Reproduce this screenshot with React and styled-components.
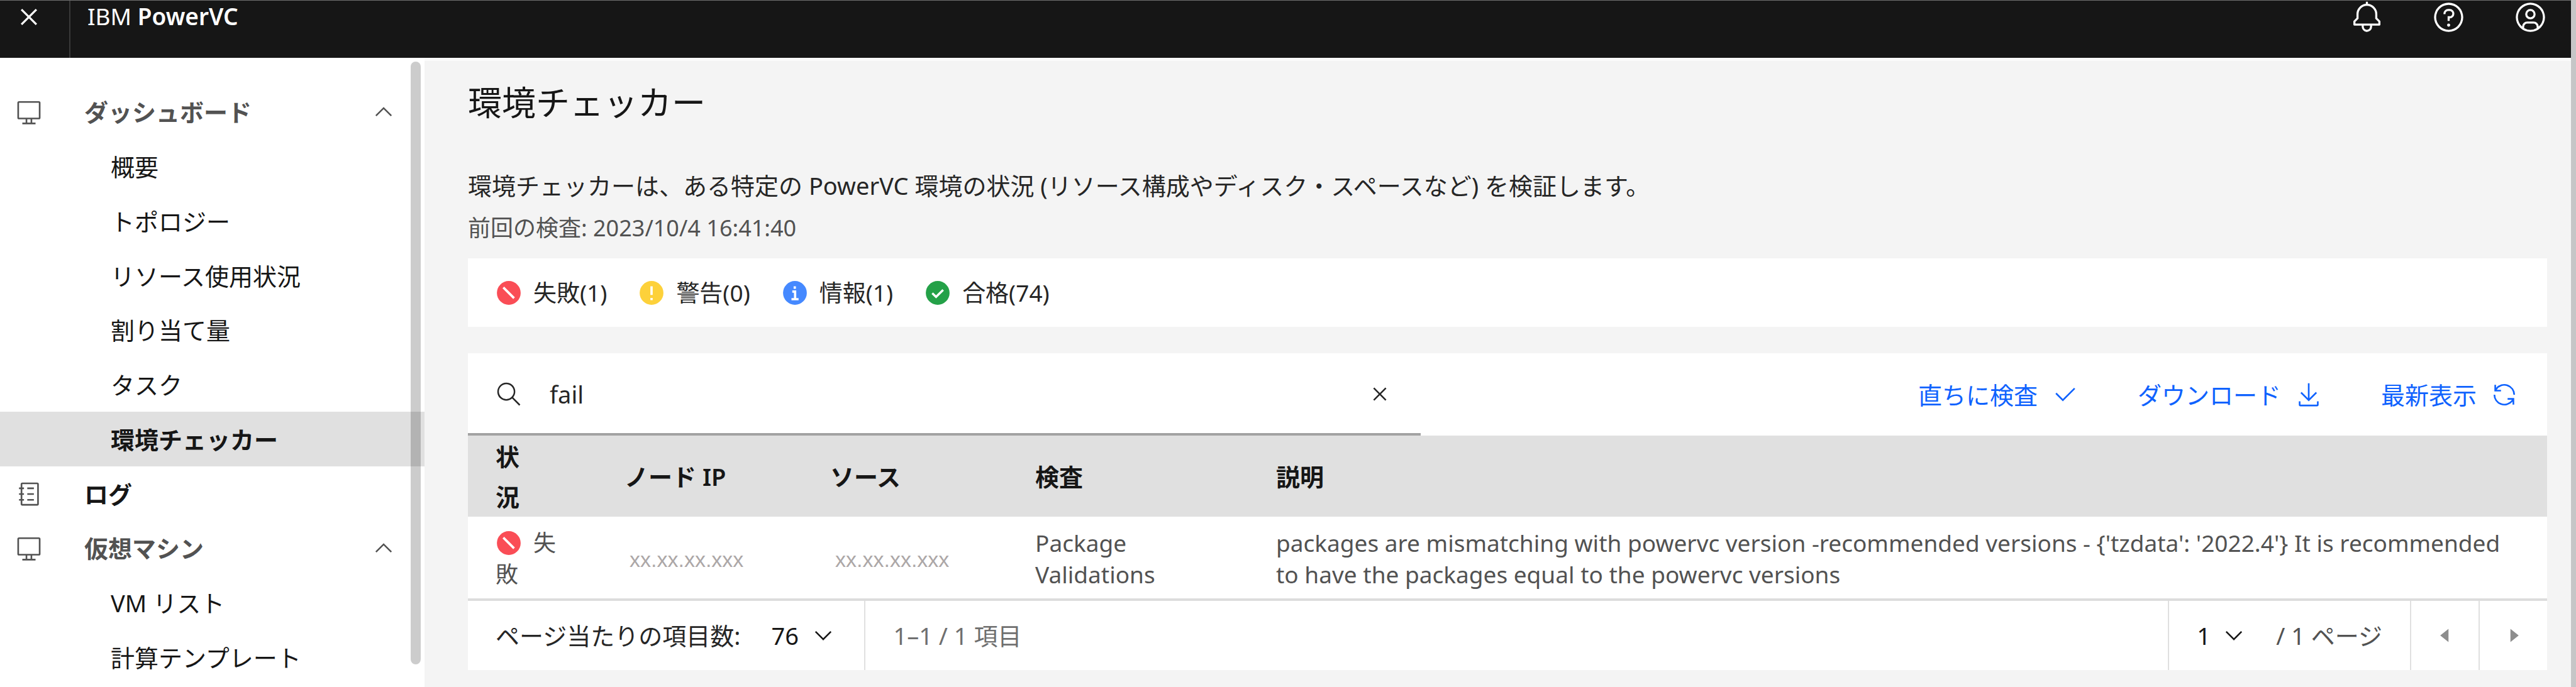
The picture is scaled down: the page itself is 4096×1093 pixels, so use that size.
import React, { useState } from "react";
import styled, { createGlobalStyle, css } from "styled-components";

const color = {
  ink: "#161616",
  text: "#262626",
  muted: "#525252",
  subtle: "#6f6f6f",
  line: "#e0e0e0",
  layer: "#ffffff",
  background: "#f4f4f4",
  link: "#0f62fe",
};

const GlobalStyle = createGlobalStyle`
  *, *::before, *::after { box-sizing: border-box; }
  body {
    margin: 0;
    background: ${color.background};
    color: ${color.text};
    font-family: "Noto Sans", "Noto Sans CJK JP", sans-serif;
    font-size: 38px;
    line-height: 50px;
  }
  button, input, select { font: inherit; color: inherit; margin: 0; }
  button { background: none; border: 0; padding: 0; cursor: pointer; }
  a { color: inherit; text-decoration: none; }
  svg { display: block; flex: none; }
`;

/* ---------- icons ---------- */

const Glyph = styled.svg`
  width: ${(p) => p.$size || 42}px;
  height: ${(p) => p.$size || 42}px;
  fill: currentColor;
`;

const paths = {
  close: "M24 9.4L22.6 8 16 14.6 9.4 8 8 9.4 14.6 16 8 22.6 9.4 24 16 17.4 22.6 24 24 22.6 17.4 16z",
  bell: "M28.707 19.293L26 16.586V13a10.014 10.014 0 0 0-9-9.95V1h-2v2.05A10.014 10.014 0 0 0 6 13v3.586l-2.707 2.707A1 1 0 0 0 3 20v3a1 1 0 0 0 1 1h7v.777a5.152 5.152 0 0 0 4.5 5.199A5.006 5.006 0 0 0 21 25v-1h7a1 1 0 0 0 1-1v-3a1 1 0 0 0-.293-.707zM19 25a3 3 0 0 1-6 0v-1h6zM27 22H5v-1.586l2.707-2.707A1 1 0 0 0 8 17v-4a8 8 0 0 1 16 0v4a1 1 0 0 0 .293.707L27 20.414z",
  help: "M16 2a14 14 0 1 0 14 14A14 14 0 0 0 16 2zm0 26a12 12 0 1 1 12-12 12 12 0 0 1-12 12zM16 22a1.5 1.5 0 1 0 0 3 1.5 1.5 0 0 0 0-3zM17 8h-1.5a4.49 4.49 0 0 0-4.5 4.5v.5h2v-.5a2.5 2.5 0 0 1 2.5-2.5H17a2.5 2.5 0 0 1 0 5h-2v4.5h2V17a4.5 4.5 0 0 0 0-9z",
  user: "M16 8a5 5 0 1 0 5 5 5 5 0 0 0-5-5zm0 8a3 3 0 1 1 3-3 3 3 0 0 1-3 3zM16 2a14 14 0 1 0 14 14A14.016 14.016 0 0 0 16 2zm-6 24.377V25a3.003 3.003 0 0 1 3-3h6a3.003 3.003 0 0 1 3 3v1.377a11.899 11.899 0 0 1-12 0zm13.993-1.451A5.002 5.002 0 0 0 19 20h-6a5.002 5.002 0 0 0-4.992 4.926 12 12 0 1 1 15.985 0z",
  screen: "M28 3H4a2 2 0 0 0-2 2v18a2 2 0 0 0 2 2h8v4H8v2h16v-2h-4v-4h8a2 2 0 0 0 2-2V5a2 2 0 0 0-2-2zM18 29h-4v-4h4zM28 23H4V5h24z",
  catalog: "M26 2H8a2 2 0 0 0-2 2v4H4v2h2v5H4v2h2v5H4v2h2v4a2 2 0 0 0 2 2h18a2 2 0 0 0 2-2V4a2 2 0 0 0-2-2zm0 26H8v-4h2v-2H8v-5h2v-2H8v-5h2V8H8V4h18zM14 8h8v2h-8zM14 15h8v2h-8zM14 22h8v2h-8z",
  chevronUp: "M16 10l10 10-1.4 1.4-8.6-8.6-8.6 8.6L6 20z",
  chevronDown: "M16 22L6 12l1.4-1.4 8.6 8.6 8.6-8.6L26 12z",
  search: "M30 28.6L21.4 20c3.8-4.6 3.2-11.6-1.4-15.4S8.4 1.4 4.6 6 1.4 17.6 6 21.4c4 3.4 10 3.4 14 0l8.6 8.6zM4 13c0-5 4-9 9-9s9 4 9 9-4 9-9 9-9-4-9-9z",
  check: "M13 24L4 15l1.414-1.414L13 21.171 26.586 7.586 28 9z",
  download: "M26 24v4H6v-4H4v4a2 2 0 0 0 2 2h20a2 2 0 0 0 2-2v-4zM26 14l-1.41-1.41L17 20.17V2h-2v18.17l-7.59-7.58L6 14l10 10z",
  renew: "M12 10H6.78A11 11 0 0 1 27 16h2A13 13 0 0 0 6 7.68V4H4v8h8zM20 22h5.22A11 11 0 0 1 5 16H3a13 13 0 0 0 23 8.32V28h2v-8h-8z",
  caretLeft: "M20 24l-10-8 10-8z",
  caretRight: "M12 8l10 8-10 8z",
};

const Icon = ({ name, size }) => (
  <Glyph $size={size} viewBox="0 0 32 32" aria-hidden="true">
    <path d={paths[name]} />
  </Glyph>
);

const statusKinds = {
  fail: { fill: "#fa4d56", mark: <path d="M9.4 9.4l13 13" strokeWidth="2.8" /> },
  warn: { fill: "#fdd13a", mark: <path d="M16 8v10.4M16 22v2.8" strokeWidth="2.8" /> },
  info: { fill: "#4589ff", mark: <path d="M15.8 8v3M12.8 14.4h3.4v9M11.8 23.6h8.6" strokeWidth="2.8" /> },
  pass: { fill: "#24a148", mark: <path d="M9.4 16.4l4.6 4.4 8.6-8.4" strokeWidth="2.6" /> },
};

const StatusIcon = ({ kind }) => (
  <Glyph viewBox="0 0 32 32" aria-hidden="true">
    <circle cx="16" cy="16" r="14.4" fill={statusKinds[kind].fill} />
    <g fill="none" stroke="#fff">{statusKinds[kind].mark}</g>
  </Glyph>
);

/* ---------- shell ---------- */

const Shell = styled.div`
  display: flex;
  flex-direction: column;
  min-height: 100vh;
  border-right: 8px solid #c6c6c7;
`;

const Header = styled.header`
  display: flex;
  align-items: stretch;
  height: 92px;
  background: ${color.ink};
  color: #fff;
  border-top: 1px solid #6f6f6f;
`;

const MenuButton = styled.button`
  display: flex;
  justify-content: center;
  width: 112px;
  padding-right: 18px;
  border-right: 2px solid #393939;
`;

const Brand = styled.a`
  padding-left: 27px;
  font-size: 37px;
  b { font-weight: 600; }
`;

const HeaderActions = styled.div`
  display: flex;
  margin-left: auto;
`;

const HeaderButton = styled.button`
  display: flex;
  justify-content: center;
  width: 130px;
`;

const Body = styled.div`
  display: flex;
  flex: 1;
`;

const Sidebar = styled.nav`
  position: relative;
  display: flex;
  flex: none;
  width: 675px;
  background: ${color.layer};
  padding: 43px 0 5px;
`;

const ScrollThumb = styled.div`
  position: absolute;
  top: 6px;
  right: 6px;
  bottom: 37px;
  width: 16px;
  border-radius: 8px;
  background: rgba(0, 0, 0, 0.2);
`;

const NavList = styled.ul`
  display: flex;
  flex-direction: column;
  flex: 1;
  margin: 0;
  padding: 0;
  list-style: none;
`;

const NavItem = styled.li`
  display: flex;
  flex: 1;
  min-height: 80px;
`;

const navRow = css`
  display: flex;
  align-items: center;
  width: 100%;
  text-align: left;
`;

const groupRow = css`
  ${navRow}
  gap: 67px;
  padding: 0 44px 0 25px;
  font-weight: 600;
`;

const GroupButton = styled.button`
  ${groupRow}
  color: ${color.muted};
  & > svg:last-child { margin-left: auto; }
`;

const GroupLink = styled.a`
  ${groupRow}
  color: ${color.ink};
  & > svg { color: ${color.muted}; }
`;

const SubLink = styled.a`
  ${navRow}
  padding-left: 176px;
  color: ${color.ink};
  ${(p) => p.$current && css`background: ${color.line}; font-weight: 600;`}
`;

/* ---------- page ---------- */

const Main = styled.main`
  flex: 1;
  min-width: 0;
  padding: 32px 38px 28px 69px;
  border-top: 5px solid #fafafa;
`;

const Title = styled.h1`
  margin: 0;
  font-size: 54px;
  font-weight: 400;
  line-height: 68px;
  color: ${color.ink};
`;

const Lead = styled.p`
  margin: 73px 0 0;
`;

const LastRun = styled.p`
  margin: 18px 0 0;
  font-size: 36px;
  color: ${color.muted};
`;

const Summary = styled.ul`
  display: flex;
  gap: 50px;
  margin: 23px 0 42px;
  padding: 30px 44px 29px;
  list-style: none;
  font-size: 37px;
  background: ${color.layer};
`;

const SummaryItem = styled.li`
  display: flex;
  align-items: center;
  gap: 18px;
`;

const Toolbar = styled.div`
  display: grid;
  grid-template-columns: 11fr 13fr;
  height: 131px;
  background: ${color.layer};
`;

const SearchBox = styled.div`
  display: flex;
  align-items: center;
  padding: 2px 44px 0;
  border-bottom: 4px solid #a2a2a2;
`;

const SearchInput = styled.input`
  flex: 1;
  min-width: 0;
  margin: 0 44px;
  padding: 0;
  border: 0;
  outline: 0;
  background: none;
`;

const Actions = styled.div`
  display: flex;
  justify-content: flex-end;
`;

const Action = styled.button`
  display: flex;
  align-items: center;
  gap: 23px;
  padding: 0 47px;
  color: ${color.link};
`;

const Table = styled.table`
  width: 100%;
  table-layout: fixed;
  border-collapse: separate;
  border-spacing: 0;
  background: ${color.layer};
  border-bottom: 4px solid #dcdcdc;
`;

const Col = styled.col`
  width: ${(p) => p.$width}px;
`;

const Th = styled.th`
  height: 129px;
  padding: 0 42px 0 ${(p) => (p.$narrow ? 44 : 42)}px;
  ${(p) => p.$narrow && css`padding-right: 110px;`}
  background: ${color.line};
  color: ${color.ink};
  font-weight: 600;
  line-height: 64px;
  text-align: left;
`;

const Td = styled.td`
  height: 130px;
  padding: 4px 42px 0 ${(p) => (p.$first ? 44 : 42)}px;
  font-size: ${(p) => (p.$first ? 36 : 37)}px;
  color: ${color.muted};
  vertical-align: middle;
  & > svg {
    display: inline-block;
    margin-right: 18px;
    vertical-align: -8px;
  }
`;

const Address = styled.span`
  padding-left: 8px;
  font-family: "Liberation Sans", Arial, sans-serif;
  font-size: 34px;
  color: #aca7a7;
`;

const Pagination = styled.div`
  display: flex;
  align-items: stretch;
  height: 110px;
  background: ${color.layer};
`;

const PageCell = styled.div`
  display: flex;
  align-items: center;
  padding: 0 44px;
  white-space: nowrap;
  color: ${(p) => p.$tone || color.text};
  ${(p) => p.$divided && css`border-left: 2px solid ${color.line};`}
  ${(p) => p.$end && css`margin-left: auto;`}
`;

const SelectWrap = styled.div`
  display: flex;
  align-items: center;
  position: relative;
  color: ${color.ink};
  & > svg { position: absolute; right: 0; pointer-events: none; }
`;

const Select = styled.select`
  appearance: none;
  width: ${(p) => p.$width}px;
  padding: 0;
  border: 0;
  outline: 0;
  background: none;
`;

const PageSizeLabel = styled.label`
  margin-right: 49px;
`;

const PageTotal = styled.label`
  margin-left: 46px;
  color: ${color.muted};
`;

const PageButton = styled.button`
  display: flex;
  align-items: center;
  justify-content: center;
  width: 109px;
  border-left: 2px solid ${color.line};
  color: #8d8d8d;
`;

/* ---------- data ---------- */

const nav = [
  { kind: "group", icon: "screen", label: "ダッシュボード" },
  { kind: "sub", label: "概要" },
  { kind: "sub", label: "トポロジー" },
  { kind: "sub", label: "リソース使用状況" },
  { kind: "sub", label: "割り当て量" },
  { kind: "sub", label: "タスク" },
  { kind: "sub", label: "環境チェッカー", current: true },
  { kind: "link", icon: "catalog", label: "ログ" },
  { kind: "group", icon: "screen", label: "仮想マシン" },
  { kind: "sub", label: "VM リスト" },
  { kind: "sub", label: "計算テンプレート" },
];

const summary = [
  ["fail", "失敗(1)"],
  ["warn", "警告(0)"],
  ["info", "情報(1)"],
  ["pass", "合格(74)"],
];

const actions = [
  ["check", "直ちに検査"],
  ["download", "ダウンロード"],
  ["renew", "最新表示"],
];

const rows = [
  {
    kind: "fail",
    status: "失敗",
    node: "xx.xx.xx.xxx",
    source: "xx.xx.xx.xxx",
    check: "Package Validations",
    text: "packages are mismatching with powervc version -recommended versions - {'tzdata': '2022.4'} It is recommended to have the packages equal to the powervc versions",
  },
];

const NavEntry = ({ item }) => {
  if (item.kind === "group") {
    return (
      <GroupButton type="button" aria-expanded="true">
        <Icon name={item.icon} />
        {item.label}
        <Icon name="chevronUp" />
      </GroupButton>
    );
  }
  if (item.kind === "link") {
    return (
      <GroupLink href="#">
        <Icon name={item.icon} />
        {item.label}
      </GroupLink>
    );
  }
  return (
    <SubLink href="#" $current={item.current} aria-current={item.current ? "page" : undefined}>
      {item.label}
    </SubLink>
  );
};

export default function App() {
  const [query, setQuery] = useState("fail");

  return (
    <>
      <GlobalStyle />
      <Shell>
        <Header>
          <MenuButton type="button" aria-label="メニューを閉じる">
            <Icon name="close" size={52} />
          </MenuButton>
          <Brand href="#">
            IBM <b>PowerVC</b>
          </Brand>
          <HeaderActions>
            <HeaderButton type="button" aria-label="通知"><Icon name="bell" size={53} /></HeaderButton>
            <HeaderButton type="button" aria-label="ヘルプ"><Icon name="help" size={53} /></HeaderButton>
            <HeaderButton type="button" aria-label="ユーザー"><Icon name="user" size={53} /></HeaderButton>
          </HeaderActions>
        </Header>

        <Body>
          <Sidebar>
            <NavList>
              {nav.map((item) => (
                <NavItem key={item.label}>
                  <NavEntry item={item} />
                </NavItem>
              ))}
            </NavList>
            <ScrollThumb />
          </Sidebar>

          <Main>
            <Title>環境チェッカー</Title>
            <Lead>
              環境チェッカーは、ある特定の PowerVC 環境の状況 (リソース構成やディスク・スペースなど) を検証します。
            </Lead>
            <LastRun>前回の検査: 2023/10/4 16:41:40</LastRun>

            <Summary>
              {summary.map(([kind, label]) => (
                <SummaryItem key={kind}>
                  <StatusIcon kind={kind} />
                  {label}
                </SummaryItem>
              ))}
            </Summary>

            <Toolbar>
              <SearchBox>
                <Icon name="search" />
                <SearchInput
                  type="text"
                  aria-label="検索"
                  value={query}
                  onChange={(e) => setQuery(e.target.value)}
                />
                <button type="button" aria-label="クリア" onClick={() => setQuery("")}>
                  <Icon name="close" />
                </button>
              </SearchBox>
              <Actions>
                {actions.map(([icon, label]) => (
                  <Action type="button" key={icon}>
                    {label}
                    <Icon name={icon} />
                  </Action>
                ))}
              </Actions>
            </Toolbar>

            <Table>
              <colgroup>
                <Col $width={207} />
                <Col $width={327} />
                <Col $width={326} />
                <Col $width={383} />
                <col />
              </colgroup>
              <thead>
                <tr>
                  <Th scope="col" $narrow>状況</Th>
                  <Th scope="col">ノード IP</Th>
                  <Th scope="col">ソース</Th>
                  <Th scope="col">検査</Th>
                  <Th scope="col">説明</Th>
                </tr>
              </thead>
              <tbody>
                {rows.map((row) => (
                  <tr key={row.check}>
                    <Td $first>
                      <StatusIcon kind={row.kind} />
                      {row.status}
                    </Td>
                    <Td><Address>{row.node}</Address></Td>
                    <Td><Address>{row.source}</Address></Td>
                    <Td>{row.check}</Td>
                    <Td>{row.text}</Td>
                  </tr>
                ))}
              </tbody>
            </Table>

            <Pagination>
              <PageCell>
                <PageSizeLabel htmlFor="page-size">ページ当たりの項目数:</PageSizeLabel>
                <SelectWrap>
                  <Select id="page-size" $width={104} defaultValue="76">
                    <option>76</option>
                  </Select>
                  <Icon name="chevronDown" />
                </SelectWrap>
              </PageCell>
              <PageCell $divided $tone={color.subtle}>1–1 / 1 項目</PageCell>
              <PageCell $divided $end>
                <SelectWrap>
                  <Select id="page" $width={80} defaultValue="1">
                    <option>1</option>
                  </Select>
                  <Icon name="chevronDown" />
                </SelectWrap>
                <PageTotal htmlFor="page">/ 1 ページ</PageTotal>
              </PageCell>
              <PageButton type="button" aria-label="前のページ" disabled><Icon name="caretLeft" /></PageButton>
              <PageButton type="button" aria-label="次のページ" disabled><Icon name="caretRight" /></PageButton>
            </Pagination>
          </Main>
        </Body>
      </Shell>
    </>
  );
}
